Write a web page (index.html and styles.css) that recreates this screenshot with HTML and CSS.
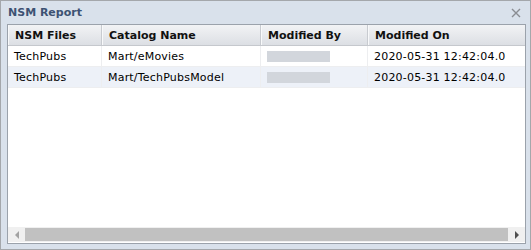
FILE: index.html
```html
<!DOCTYPE html>
<html lang="en">
<head>
  <meta charset="utf-8">
  <title>NSM Report</title>
  <link rel="stylesheet" href="styles.css">
</head>
<body>
  <div class="window">
    <div class="title-bar">
      <span class="title">NSM Report</span>
      <span class="close">
        <svg width="10" height="10" viewBox="0 0 10 10">
          <path d="M1 1 L9 9 M9 1 L1 9" stroke="#8a8d92" stroke-width="1.4" fill="none"/>
        </svg>
      </span>
    </div>

    <div class="grid">
      <div class="grid-view">
        <div class="row head">
          <div class="cell c1">NSM Files</div>
          <div class="cell c2">Catalog Name</div>
          <div class="cell c3">Modified By</div>
          <div class="cell c4">Modified On</div>
        </div>
        <div class="row">
          <div class="cell c1">TechPubs</div>
          <div class="cell c2">Mart/eMovies</div>
          <div class="cell c3"><span class="masked"></span></div>
          <div class="cell c4">2020-05-31 12:42:04.0</div>
        </div>
        <div class="row selected">
          <div class="cell c1">TechPubs</div>
          <div class="cell c2">Mart/TechPubsModel</div>
          <div class="cell c3"><span class="masked"></span></div>
          <div class="cell c4">2020-05-31 12:42:04.0</div>
        </div>
      </div>

      <div class="hscroll">
        <span class="arrow left"></span>
        <span class="thumb"></span>
        <span class="arrow right"></span>
      </div>
    </div>
  </div>
</body>
</html>
```

FILE: styles.css
```css
body {
  margin: 0;
  font-family: "DejaVu Sans", Verdana, sans-serif;
  font-size: 11px;
  color: #000;
  background: #fff;
}

.window {
  width: 531px;
  height: 250px;
  box-sizing: border-box;
  border: 1px solid #a4a7ab;
  background: #d9e1eb;
  padding: 0 4px 5px 6px;
  display: flex;
  flex-direction: column;
}

.title-bar {
  height: 23px;
  display: flex;
  align-items: center;
  justify-content: space-between;
  padding-left: 1px;
}
.title {
  font-weight: bold;
  font-size: 11px;
  color: #3d5273;
  margin-top: -1px;
}
.close {
  display: flex;
  margin-right: 5px;
  margin-top: 1px;
}

.grid {
  flex: 1;
  border: 1px solid #9ba2ab;
  background: #fff;
  display: flex;
  flex-direction: column;
  overflow: hidden;
}
.grid-view {
  flex: 1;
  overflow: hidden;
}

.row {
  display: flex;
  height: 20px;
  border-bottom: 1px solid #edeef0;
  white-space: nowrap;
  letter-spacing: 0.2px;
}
.row.head {
  height: 20px;
  border-bottom: 1px solid #c5c8cd;
  background: linear-gradient(#f2f3f5, #dcdfe4);
  font-weight: bold;
  letter-spacing: 0;
}
.row.selected {
  background: #edf1f8;
}

.cell {
  flex: none;
  box-sizing: border-box;
  padding: 1px 6px 0;
  display: flex;
  align-items: center;
  border-right: 1px solid #edeef0;
  overflow: hidden;
}
.head .cell {
  padding-top: 0;
  border-right: 1px solid #c8cbd0;
  border-left: 1px solid #f8f9fa;
  color: #111;
}
.c1 { width: 94px; }
.c2 { width: 159px; }
.c3 { width: 107px; }
.c4 { width: 170px; }

.masked {
  width: 63px;
  height: 11px;
  background: #d2d6dc;
}

.hscroll {
  height: 15px;
  background: #f0f0f0;
  display: flex;
  align-items: center;
  margin-bottom: 1px;
}
.thumb {
  flex: 1;
  height: 13px;
  background: #c1c1c1;
}
.arrow {
  width: 17px;
  height: 15px;
  display: flex;
  align-items: center;
  justify-content: center;
}
.arrow::before {
  content: "";
  width: 0;
  height: 0;
  border-top: 4px solid transparent;
  border-bottom: 4px solid transparent;
}
.arrow.left::before {
  border-right: 4px solid #a3a3a3;
}
.arrow.right::before {
  border-left: 4px solid #505050;
}
```
